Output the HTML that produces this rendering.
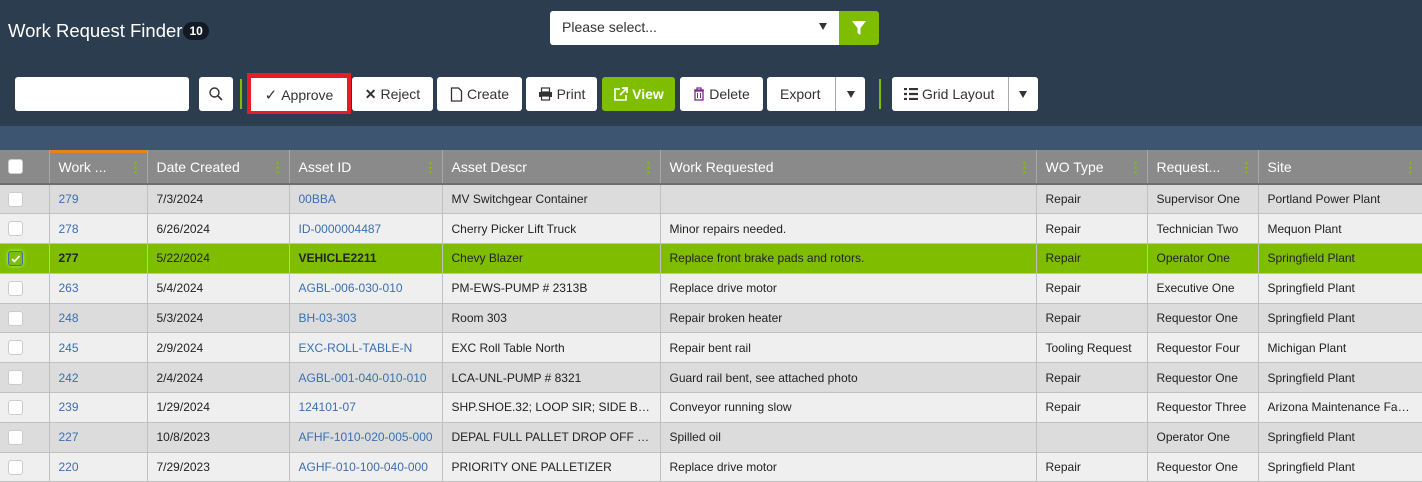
<!DOCTYPE html>
<html><head><meta charset="utf-8"><style>
*{box-sizing:border-box;margin:0;padding:0}
body{width:1422px;height:480px;overflow:hidden;background:#2d3d50;font-family:"Liberation Sans",Arial,sans-serif;position:relative}
.title{position:absolute;left:8px;top:20px;color:#fff;font-size:18.5px}
.badge{display:inline-block;background:#111a22;color:#fff;font-size:12px;font-weight:bold;border-radius:9px;padding:2px 6px;margin-left:1px;vertical-align:2px}
.sel{position:absolute;left:550px;top:11px;width:289px;height:34px;background:#fff;border-radius:3px 0 0 3px;font-size:14px;color:#333;padding:8px 12px}
.sel .ar{position:absolute;right:12px;top:12px;width:0;height:0;border-left:4px solid transparent;border-right:4px solid transparent;border-top:7px solid #333}
.filt{position:absolute;left:839px;top:11px;width:40px;height:34px;background:#7fbd00;border-radius:0 3px 3px 0}
.btn{position:absolute;top:77px;height:34px;background:#fff;border-radius:3px;font-size:14px;color:#333;display:flex;align-items:center;justify-content:center;gap:4px}
.vl{position:absolute;top:79px;width:2px;height:30px;background:#7fbd00}
.band{position:absolute;left:0;top:126px;width:1422px;height:24px;background:#3d5570}
table{position:absolute;left:0;top:150px;width:1422px;border-collapse:collapse;table-layout:fixed;font-size:12px}
th{background:#8a8a8a;color:#fff;font-weight:normal;font-size:14px;text-align:left;height:34px;padding:0 0 0 9px;border-right:1px solid #a8a8a8;border-bottom:2px solid #6e6e6e;position:relative;white-space:nowrap}
th .d{position:absolute;right:10px;top:11px;width:3px;height:13px;background:radial-gradient(circle,#7fbd00 1.2px,transparent 1.4px) 0 0/3px 4.5px}
td{height:29.8px;padding:0 6px 0 9px;border-right:1px solid #c0c0c0;border-bottom:1px solid #c0c0c0;color:#222;white-space:nowrap;overflow:hidden;text-overflow:ellipsis}
tr.a td{background:#dcdcdc}tr.b td{background:#efefef}
tr.s td{background:#7fbd00}
td.l{color:#3a6fb0}tr.s td.l{color:#222;font-weight:bold}
.cb{width:15px;height:15px;background:#fff;border:1px solid #ccc;border-radius:3px;margin-left:-1px}
.cbs{background:#7fbd00;border:1px solid #3a6fb0;box-shadow:0 0 4px #b8ff40;position:relative}
</style></head><body>
<div class="title">Work Request Finder<span class="badge">10</span></div>
<div class="sel">Please select...<span class="ar"></span></div>
<div class="filt"><svg width="40" height="34"><path d="M13 10h14l-5.5 7v7l-3 -2v-5z" fill="#fff"/></svg></div>

<div class="btn" style="left:15px;width:174px"></div>
<div class="btn" style="left:199px;width:34px"><svg width="16" height="16"><circle cx="6.5" cy="6.5" r="4.5" fill="none" stroke="#333" stroke-width="1.4"/><path d="M10 10l4 4" stroke="#333" stroke-width="1.6"/></svg></div>
<div class="vl" style="left:240px"></div>
<div style="position:absolute;left:247px;top:73px;width:104px;height:41px;background:#e81c24"></div>
<div class="btn" style="left:251px;top:78px;width:96px;height:33px;border-radius:0"><span style="font-size:15px">✓</span>Approve</div>
<div class="btn" style="left:352px;width:81px"><span style="font-weight:bold">✕</span>Reject</div>
<div class="btn" style="left:437px;width:85px"><svg width="13" height="15"><path d="M1.5 1h7l3 3v10h-10z" fill="none" stroke="#333" stroke-width="1.3"/></svg>Create</div>
<div class="btn" style="left:526px;width:71px"><svg width="15" height="14"><rect x="3.5" y="1" width="8" height="4" fill="none" stroke="#333" stroke-width="1.2"/><rect x="1" y="5" width="13" height="5" fill="#333"/><rect x="3.5" y="9" width="8" height="4" fill="#fff" stroke="#333" stroke-width="1.2"/></svg>Print</div>
<div class="btn" style="left:602px;width:73px;background:#7fbd00;color:#fff;font-weight:bold"><svg width="15" height="15"><path d="M7 2H2v11h11V8" fill="none" stroke="#fff" stroke-width="1.6"/><path d="M9 1h5v5M14 1L7 8" fill="none" stroke="#fff" stroke-width="1.8"/></svg>View</div>
<div class="btn" style="left:680px;width:83px"><svg width="12" height="14"><path d="M1 3h10M4 3V1h4v2" stroke="#7a2a8a" fill="none" stroke-width="1.3"/><rect x="2" y="4" width="8" height="9" fill="none" stroke="#7a2a8a" stroke-width="1.3"/><path d="M4.5 6v5M7.5 6v5" stroke="#7a2a8a"/></svg>Delete</div>
<div class="btn" style="left:767px;width:98px;justify-content:flex-start;padding-left:13px">Export<span style="position:absolute;left:68px;top:0;width:1px;height:34px;background:#aaa"></span><span style="position:absolute;left:80px;top:14px;border-left:4px solid transparent;border-right:4px solid transparent;border-top:7px solid #333"></span></div>
<div class="vl" style="left:879px"></div>
<div class="btn" style="left:892px;width:146px;justify-content:flex-start;padding-left:12px"><svg width="14" height="12"><path d="M0 1h3M5 1h9M0 6h3M5 6h9M0 11h3M5 11h9" stroke="#333" stroke-width="2.2"/></svg>Grid Layout<span style="position:absolute;left:116px;top:0;width:1px;height:34px;background:#aaa"></span><span style="position:absolute;left:127px;top:14px;border-left:4px solid transparent;border-right:4px solid transparent;border-top:7px solid #333"></span></div>

<div class="band"></div>
<table>
<colgroup><col style="width:49px"><col style="width:98px"><col style="width:142px"><col style="width:153px"><col style="width:218px"><col style="width:376px"><col style="width:111px"><col style="width:111px"><col style="width:164px"></colgroup>
<tr style="height:34px"><th style="height:32px"><div class="cb" style="margin-left:-1px"></div></th><th style="box-shadow:inset 0 3px 0 #e8821e">Work ...<span class="d"></span></th><th>Date Created<span class="d"></span></th><th>Asset ID<span class="d"></span></th><th>Asset Descr<span class="d"></span></th><th>Work Requested<span class="d"></span></th><th>WO Type<span class="d"></span></th><th>Request...<span class="d"></span></th><th>Site<span class="d"></span></th></tr>
<tr class="a"><td><div class="cb"></div></td><td class="l">279</td><td>7/3/2024</td><td class="l">00BBA</td><td>MV Switchgear Container</td><td></td><td>Repair</td><td>Supervisor One</td><td>Portland Power Plant</td></tr>
<tr class="b"><td><div class="cb"></div></td><td class="l">278</td><td>6/26/2024</td><td class="l">ID-0000004487</td><td>Cherry Picker Lift Truck</td><td>Minor repairs needed.</td><td>Repair</td><td>Technician Two</td><td>Mequon Plant</td></tr>
<tr class="s"><td><div class="cb cbs"><svg width="13" height="13" style="position:absolute;left:0;top:0"><path d="M3 7l2.5 2.5L10.5 4" stroke="#fff" stroke-width="1.8" fill="none"/></svg></div></td><td class="l">277</td><td>5/22/2024</td><td class="l">VEHICLE2211</td><td>Chevy Blazer</td><td>Replace front brake pads and rotors.</td><td>Repair</td><td>Operator One</td><td>Springfield Plant</td></tr>
<tr class="b"><td><div class="cb"></div></td><td class="l">263</td><td>5/4/2024</td><td class="l">AGBL-006-030-010</td><td>PM-EWS-PUMP # 2313B</td><td>Replace drive motor</td><td>Repair</td><td>Executive One</td><td>Springfield Plant</td></tr>
<tr class="a"><td><div class="cb"></div></td><td class="l">248</td><td>5/3/2024</td><td class="l">BH-03-303</td><td>Room 303</td><td>Repair broken heater</td><td>Repair</td><td>Requestor One</td><td>Springfield Plant</td></tr>
<tr class="b"><td><div class="cb"></div></td><td class="l">245</td><td>2/9/2024</td><td class="l">EXC-ROLL-TABLE-N</td><td>EXC Roll Table North</td><td>Repair bent rail</td><td>Tooling Request</td><td>Requestor Four</td><td>Michigan Plant</td></tr>
<tr class="a"><td><div class="cb"></div></td><td class="l">242</td><td>2/4/2024</td><td class="l">AGBL-001-040-010-010</td><td>LCA-UNL-PUMP # 8321</td><td>Guard rail bent, see attached photo</td><td>Repair</td><td>Requestor One</td><td>Springfield Plant</td></tr>
<tr class="b"><td><div class="cb"></div></td><td class="l">239</td><td>1/29/2024</td><td class="l">124101-07</td><td>SHP.SHOE.32; LOOP SIR; SIDE BEARING</td><td>Conveyor running slow</td><td>Repair</td><td>Requestor Three</td><td>Arizona Maintenance Facility</td></tr>
<tr class="a"><td><div class="cb"></div></td><td class="l">227</td><td>10/8/2023</td><td class="l">AFHF-1010-020-005-000</td><td>DEPAL FULL PALLET DROP OFF CONVEYOR</td><td>Spilled oil</td><td></td><td>Operator One</td><td>Springfield Plant</td></tr>
<tr class="b"><td><div class="cb"></div></td><td class="l">220</td><td>7/29/2023</td><td class="l">AGHF-010-100-040-000</td><td>PRIORITY ONE PALLETIZER</td><td>Replace drive motor</td><td>Repair</td><td>Requestor One</td><td>Springfield Plant</td></tr>
</table>
</body></html>
